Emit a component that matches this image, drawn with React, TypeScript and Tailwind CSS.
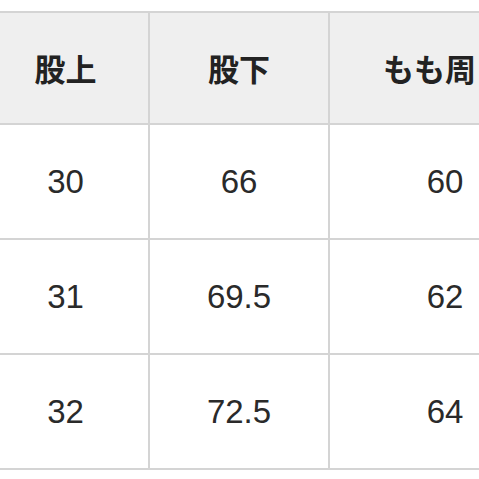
import React from 'react';

const headers = ['股上', '股下', 'もも周り'];
const rows = [
  ['30', '66', '60'],
  ['31', '69.5', '62'],
  ['32', '72.5', '64'],
];

const cellBase = 'flex items-center justify-center border-r-2 border-b-2 border-[#d4d4d4]';

const App: React.FC = () => {
  return (
    <div className="w-[479px] h-[479px] overflow-hidden bg-white pt-[11px]">
      <div
        className="ml-[-17px] w-[579px] grid grid-cols-[167px_180px_232px] border-t-2 border-[#d4d4d4]"
        style={{ fontFamily: '"Liberation Sans", Arial, sans-serif' }}
      >
        {headers.map((h) => (
          <div
            key={h}
            className={`${cellBase} h-[112px] bg-[#efefef] text-[31px] font-bold text-[#222] whitespace-nowrap`}
            style={{ fontFamily: '"Noto Sans CJK JP", "Noto Sans", sans-serif' }}
          >
            {h}
          </div>
        ))}
        {rows.map((r, i) =>
          r.map((v, j) => (
            <div key={`${i}-${j}`} className={`${cellBase} h-[115px] text-[33px] text-[#2a2a2a]`}>
              {v}
            </div>
          ))
        )}
      </div>
    </div>
  );
};

export default App;
